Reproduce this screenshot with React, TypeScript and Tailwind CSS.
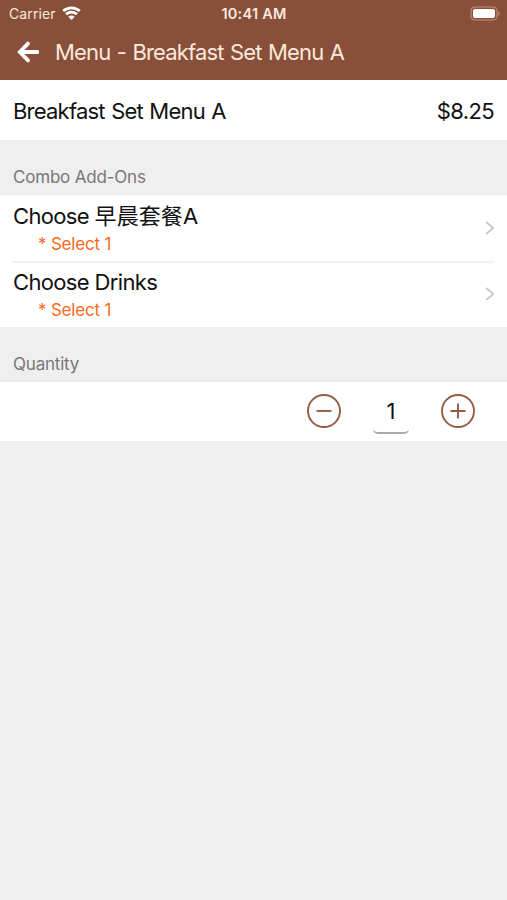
import React from 'react';

const addOns = [
  { title: 'Choose ', local: '早晨套餐', suffix: 'A', hint: '* Select 1' },
  { title: 'Choose Drinks', hint: '* Select 1' },
];

const StatusBar = () => (
  <div className="grid grid-cols-3 items-center h-[27px] pl-[9px] pr-[6px] text-[#fbe9dc]">
    <div className="flex items-center gap-[6px]">
      <span className="text-[14px] tracking-[0.1px] leading-none">Carrier</span>
      <svg className="-mt-[2px]" width="19" height="14" viewBox="0 0 19 14" fill="none" stroke="#fff" strokeWidth="2.8">
        <path d="M1.2 5C5.8.7 13.2.7 17.8 5" />
        <path d="M4.1 8.3c3.1-2.8 7.7-2.8 10.8 0" />
        <path d="M6.3 10.8c1.8-1.6 4.6-1.6 6.4 0L9.5 14z" fill="#fff" stroke="none" />
      </svg>
    </div>
    <span className="justify-self-center -ml-[2px] pt-px text-[14.5px] font-semibold leading-none tracking-[0.25px] whitespace-nowrap">
      10:41 AM
    </span>
    <svg className="justify-self-end -mt-px" width="31" height="15" viewBox="0 0 31 15" fill="none">
      <rect x="1" y="1" width="26" height="13" rx="3.8" stroke="#c08c77" strokeWidth="1.2" />
      <rect x="3" y="3" width="22" height="9" rx="2" fill="#fff" />
      <path d="M28.3 5.2v4.6c1.9-.8 1.9-3.8 0-4.6z" fill="#c08c77" />
    </svg>
  </div>
);

const SectionTitle = ({ children }: { children: React.ReactNode }) => (
  <h2 className="flex items-end h-[55px] px-[13px] pb-[6px] border-b border-[#e9e9e9] text-[17px] leading-[21px] tracking-[-0.2px] text-[#777]">
    {children}
  </h2>
);

const Chevron = () => (
  <svg className="-mr-px mb-px" width="10" height="14" viewBox="0 0 10 14" fill="none" stroke="#c6c6c8" strokeWidth="1.7">
    <path d="M1.2 1l7 6-7 6" />
  </svg>
);

const App = () => {
  return (
    <div className="min-h-screen bg-[#efefef] text-[#111] font-['Inter','Noto_Sans_CJK_TC',sans-serif]">
      <header className="h-20 bg-[#884f3a]">
        <StatusBar />
        <div className="flex items-center h-[50px] pl-[17px] gap-[16px]">
          <svg
            width="22"
            height="22"
            viewBox="0 0 22 22"
            fill="none"
            stroke="#fff"
            strokeWidth="3.8"
            strokeLinecap="round"
          >
            <path d="M11 2.6L2.8 11l8.2 8.4M3.4 11h17" />
          </svg>
          <h1 className="text-[22px] leading-none tracking-[-0.85px] [word-spacing:1.1px] text-[#fbe9dc] whitespace-nowrap">
            Menu - Breakfast Set Menu A
          </h1>
        </div>
      </header>

      <div className="flex items-center justify-between h-[60px] px-[13px] pt-[3px] bg-white text-[22px] tracking-[-0.78px] [word-spacing:1px]">
        <span>Breakfast Set Menu A</span>
        <span className="tracking-[-0.6px]">$8.25</span>
      </div>

      <SectionTitle>Combo Add-Ons</SectionTitle>
      <ul className="bg-white px-[13px] pt-px">
        {addOns.map((item, index) => (
          <li
            className="flex items-center justify-between h-[67px] border-b-2 border-[#f3f3f3] last:h-16 last:pb-px last:border-0"
            key={index}
          >
            <div className="h-[60px] pt-[3px] tracking-[-0.65px]">
              <p className="text-[22px] leading-[28px]">
                {item.title}
                {item.local && <span className="tracking-[0.1px]">{item.local}</span>}
                {item.suffix}
              </p>
              <p className="pl-[25px] text-[17px] leading-[29px] tracking-[-0.2px] text-[#f96a1b]">{item.hint}</p>
            </div>
            <Chevron />
          </li>
        ))}
      </ul>

      <SectionTitle>Quantity</SectionTitle>
      <div className="flex items-center justify-end gap-[32px] h-[59px] pr-[32px] bg-white">
        <button className="pb-px">
          <svg width="34" height="34" viewBox="0 0 34 34" fill="none" stroke="#965b47" strokeWidth="1.9">
            <circle cx="17" cy="17" r="16" />
            <path d="M9.5 17h15" />
          </svg>
        </button>
        <span className="flex items-center justify-center w-9 h-[46px] mb-px pt-[3px] rounded-[5px] border-b-2 border-[#aaa] text-[22px]">
          1
        </span>
        <button className="pb-px">
          <svg width="34" height="34" viewBox="0 0 34 34" fill="none" stroke="#965b47" strokeWidth="1.9">
            <circle cx="17" cy="17" r="16" />
            <path d="M9.5 17h15M17 9.5v15" />
          </svg>
        </button>
      </div>
    </div>
  );
};

export default App;
